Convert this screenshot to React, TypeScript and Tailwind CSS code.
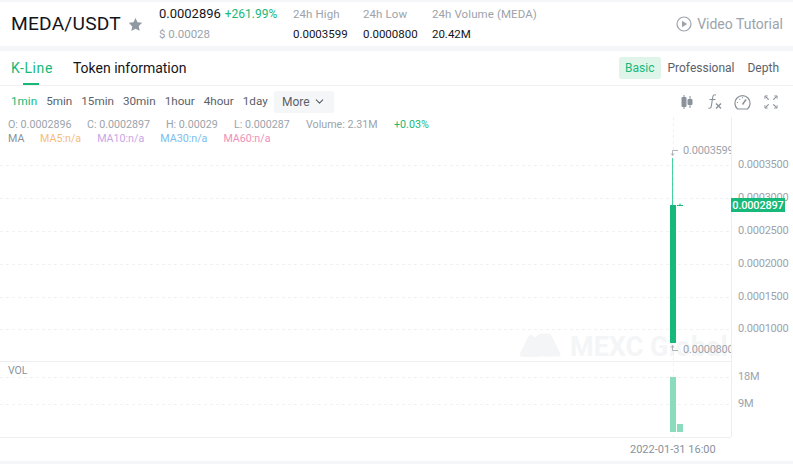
import { ChevronDown } from 'lucide-react'

const font = { fontFamily: 'Roboto' }

function HeaderStat({ label, value }: { label: string; value: string }) {
  return (
    <div className="flex flex-col gap-[4px] text-[11.5px] leading-[16px]">
      <span className="text-[#9ca3ab] tracking-[0.1px]">{label}</span>
      <span className="text-[#14151a]">{value}</span>
    </div>
  )
}

function ChartIcons() {
  return (
    <div className="flex items-center text-[#8a929b]">
      <svg width="12" height="14" viewBox="0 0 12 14" fill="currentColor">
        <rect x="2.500" y="0" width="1" height="14" />
        <rect x="0.500" y="2" width="5" height="10" rx="1" />
        <rect x="8.500" y="1" width="1" height="12" />
        <rect x="6.500" y="4" width="5" height="6" rx="1" />
      </svg>
      <svg className="ml-[14px]" width="15" height="15" viewBox="0 0 15 15" fill="none" stroke="currentColor" strokeWidth="1.100">
        <path d="M9 1c-2-.6-3 .3-3.300 2.300l-1.300 8.500c-.3 2-1.300 2.800-3 2.200" />
        <path d="M2.500 5.500h6" />
        <path d="M9 9.500l5 5M14 9.500l-5 5" strokeWidth="1.400" />
      </svg>
      <svg className="ml-[12px]" width="17" height="16" viewBox="0 0 17 16" fill="none" stroke="currentColor" strokeWidth="1.200">
        <path d="M3.500 15h10a7.600 7.600 0 1 0-10 0z" />
        <path d="M8.500 10.500l3.500-5" strokeWidth="1.500" />
        <path d="M3 8.500h1M5.500 5l.6.6M8.500 3.300v1" />
      </svg>
      <svg className="ml-[13px]" width="14" height="14" viewBox="0 0 15 15" fill="none" stroke="currentColor" strokeWidth="1.300">
        <path d="M1.500 1.500l3.500 3.500M13.500 1.500l-3.500 3.500M1.500 13.500l3.500-3.500M13.500 13.500l-3.500-3.500" />
        <path d="M1 4V1h3M11 1h3v3M1 11v3h3M14 11v3h-3" strokeWidth="1" />
      </svg>
    </div>
  )
}

function Axis({ y, text }: { y: number; text: string }) {
  return (
    <span className="absolute left-[738px] text-[11px] leading-none tracking-[-0.2px] text-[#9ca3ab]" style={{ top: y - 6 }}>
      {text}
    </span>
  )
}

function Chart() {
  const gridY = [165, 198, 231, 264, 297, 329, 377, 404].map((y) => y - 117)
  return (
    <div className="relative h-[320px] w-full">
      <span className="absolute left-[570px] top-[217px] w-[161px] overflow-hidden whitespace-nowrap text-[27px] font-bold leading-none text-[#f4f5f6]">MEXC Global</span>
      <svg className="absolute left-0 top-0" width="793" height="347" viewBox="0 0 793 347">
        {gridY.map((y) => (
          <line key={y} x1="0" x2="731" y1={y + 0.5} y2={y + 0.5} stroke="#f0f1f3" strokeDasharray="3 3" />
        ))}
        <line x1="673.500" x2="673.500" y1="0" y2="320" stroke="#f0f1f3" strokeDasharray="3 3" />
        <line x1="0" x2="731" y1="244.500" y2="244.500" stroke="#eceef0" />
        <line x1="0" x2="731" y1="320.500" y2="320.500" stroke="#eceef0" />
        <line x1="731.500" x2="731.500" y1="0" y2="320" stroke="#eceef0" />
        {/* watermark */}
        <path d="M523 237L531 221L539 237Z" fill="#f4f5f6" stroke="#f4f5f6" strokeWidth="6" strokeLinejoin="round" />
        <path d="M543 237L535 223L541 219L549 219L558 237Z" fill="#f4f5f6" stroke="#f4f5f6" strokeWidth="5" strokeLinejoin="round" />
        {/* candle */}
        <line x1="672.500" x2="672.500" y1="41" y2="88" stroke="#48d19e" strokeWidth="1" />
        <rect x="670" y="88" width="6" height="138" fill="#16b979" />
        <path d="M677 88.500h6M680 86.500v2" stroke="#16b979" strokeWidth="1" />
        <path d="M678 33.500h-5.500v4.500M671 36.500l1.500 2 1.500-2" stroke="#9ca3ab" fill="none" strokeWidth="0.800" />
        <path d="M678 233.500h-5.500v-4.500M671 230.500l1.500-2 1.500 2" stroke="#9ca3ab" fill="none" strokeWidth="0.800" />
        {/* volume */}
        <rect x="670" y="260" width="6" height="55" fill="#8adcbc" />
        <rect x="677" y="307" width="6" height="8" fill="#8adcbc" />
      </svg>

      <div className="absolute left-[683px] top-[28px] w-[48px] overflow-hidden whitespace-nowrap text-[11px] leading-none tracking-[-0.2px] text-[#9ca3ab]">0.0003599</div>
      <div className="absolute left-[683px] top-[227px] w-[48px] overflow-hidden whitespace-nowrap text-[11px] leading-none tracking-[-0.2px] text-[#9ca3ab]">0.0000800</div>
      <Axis y={48} text="0.0003500" />
      <Axis y={81} text="0.0003000" />
      <Axis y={114} text="0.0002500" />
      <Axis y={147} text="0.0002000" />
      <Axis y={180} text="0.0001500" />
      <Axis y={212} text="0.0001000" />
      <Axis y={260} text="18M" />
      <Axis y={287} text="9M" />
      <span className="absolute left-[731px] top-[81px] flex h-[14px] w-[54px] items-center justify-center bg-[#16b979] text-[11px] font-medium leading-none tracking-[-0.2px] text-white">0.0002897</span>
      <span className="absolute left-[8px] top-[249px] text-[10.500px] leading-none text-[#8a929b]">VOL</span>
      <span className="absolute left-[630px] top-[327px] text-[11px] leading-none text-[#8a929b]">2022-01-31 16:00</span>
    </div>
  )
}

export default function App() {
  return (
    <div style={font} className="h-[464px] w-[793px] overflow-hidden bg-[#f5f6f7]">
      <header className="mt-[2px] flex h-[44px] items-center bg-white pl-[11px] pr-[10px]">
        <h1 className="text-[19.200px] font-normal leading-none text-[#14151a] tracking-[0.2px]">MEDA/USDT</h1>
        <svg className="ml-[7px] text-[#9098a1]" width="15" height="15" viewBox="0 0 24 24" fill="currentColor">
          <path d="M12 1.500l3.200 6.900 7.500.9-5.500 5.200 1.400 7.500L12 18.700l-6.600 3.800 1.400-7.500L1.300 9.300l7.500-.9z" />
        </svg>
        <div className="ml-[16px] flex w-[134px] flex-col gap-[4px]">
          <div className="flex items-baseline gap-[4px] leading-[16px]">
            <span className="text-[13px] text-[#14151a]">0.0002896</span>
            <span className="text-xs text-[#16b979]">+261.99%</span>
          </div>
          <span className="text-[11.500px] leading-[16px] text-[#9ca3ab]">$ 0.00028</span>
        </div>
        <div className="w-[70px]"><HeaderStat label="24h High" value="0.0003599" /></div>
        <div className="w-[69px]"><HeaderStat label="24h Low" value="0.0000800" /></div>
        <HeaderStat label="24h Volume (MEDA)" value="20.42M" />
        <div className="ml-auto flex items-center gap-[5px] text-[#9ca3ab]">
          <svg width="16" height="16" viewBox="0 0 16 16" fill="none">
            <circle cx="8" cy="8" r="7" stroke="currentColor" strokeWidth="1.200" />
            <path d="M6 4.800v6.400L11.200 8z" fill="currentColor" />
          </svg>
          <span className="text-[14px] leading-none">Video Tutorial</span>
        </div>
      </header>

      <main className="mt-[5px] h-[410px] bg-white">
        <div className="flex h-[35px] items-center justify-between border-b border-[#f0f1f3] pl-[11px] pr-[14px]">
          <div className="flex h-full items-center gap-[20px] text-[14px]">
            <div className="relative flex h-full items-center tracking-[0.6px] text-[#16b979]">
              K-Line
              <span className="absolute bottom-0 left-[12px] h-[2px] w-[16px] bg-[#16b979]" />
            </div>
            <span className="text-[#14151a]">Token information</span>
          </div>
          <div className="flex items-center text-xs text-[#5b6169]">
            <span className="flex h-[22px] items-center rounded-[2px] bg-[#dff5ea] px-[6px] text-[#16b979]">Basic</span>
            <span className="ml-[7px]">Professional</span>
            <span className="ml-[13px]">Depth</span>
          </div>
        </div>

        <div className="flex h-[31px] items-center justify-between pl-[11px] pr-[15px]">
          <div className="flex items-center gap-[9px] text-[11.700px] text-[#5b6169]">
            <span className="text-[#16b979]">1min</span>
            <span>5min</span>
            <span>15min</span>
            <span>30min</span>
            <span>1hour</span>
            <span>4hour</span>
            <span>1day</span>
            <span className="-ml-[3px] flex h-[22px] w-[60px] items-center justify-center gap-[3px] rounded-[2px] bg-[#f5f6f7] text-xs">
              More <ChevronDown size={13} />
            </span>
          </div>
          <ChartIcons />
        </div>

        <div className="relative">
          <div className="absolute left-[8px] top-[1px] z-10 flex flex-col text-[10.700px] leading-[14px]">
            <div className="flex text-[#9ca3ab]">
              <span className="w-[79px]">O: 0.0002896</span>
              <span className="w-[79px]">C: 0.0002897</span>
              <span className="w-[68px]">H: 0.00029</span>
              <span className="w-[72px]">L: 0.000287</span>
              <span className="w-[88px]">Volume: 2.31M</span>
              <span className="text-[#16b979]">+0.03%</span>
            </div>
            <div className="flex gap-[16px]">
              <span className="w-[16px] text-[#8a929b]">MA</span>
              <span className="text-[#f5bd7a]">MA5:n/a</span>
              <span className="text-[#c8a6e6]">MA10:n/a</span>
              <span className="text-[#7dbcf0]">MA30:n/a</span>
              <span className="text-[#ef8fb8]">MA60:n/a</span>
            </div>
          </div>
          <Chart />
        </div>
      </main>
    </div>
  )
}
